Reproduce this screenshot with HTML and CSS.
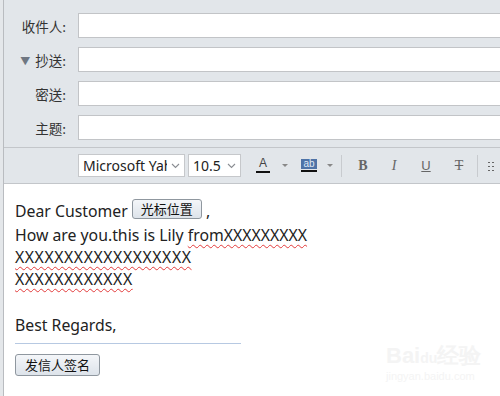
FILE: index.html
```html
<!DOCTYPE html>
<html>
<head>
<meta charset="utf-8">
<link rel="stylesheet" href="styles.css">
</head>
<body>
<div class="app">
  <div class="header">
    <div class="row"><label class="lbl">收件人:</label><div class="field"></div></div>
    <div class="row"><label class="lbl"><span class="tri">▼</span>抄送:</label><div class="field"></div></div>
    <div class="row"><label class="lbl">密送:</label><div class="field"></div></div>
    <div class="row"><label class="lbl">主题:</label><div class="field"></div></div>
  </div>
  <div class="toolbar">
    <div class="sel font">Microsoft Yah<span class="chev"><svg width="9" height="6" viewBox="0 0 9 6"><path d="M1 1l3.5 3.5L8 1" fill="none" stroke="#8a8d92" stroke-width="1.1"/></svg></span></div>
    <div class="sel size">10.5<span class="chev"><svg width="9" height="6" viewBox="0 0 9 6"><path d="M1 1l3.5 3.5L8 1" fill="none" stroke="#8a8d92" stroke-width="1.1"/></svg></span></div>
    <div class="tool colorA"><span class="a">A</span><span class="bar"></span></div>
    <span class="drop d1"></span>
    <div class="tool hl"><span class="ab">ab</span><span class="bar"></span></div>
    <span class="drop d2"></span>
    <span class="sep s1"></span>
    <div class="tool b">B</div>
    <div class="tool i">I</div>
    <div class="tool u">U</div>
    <div class="tool s">T</div>
    <span class="sep s2"></span>
    <div class="tool list"><svg width="12" height="12" viewBox="0 0 12 12"><g fill="#666"><rect x="0" y="2" width="2" height="1"/><rect x="4" y="2" width="2" height="1"/><rect x="0" y="6" width="2" height="1"/><rect x="4" y="6" width="2" height="1"/><rect x="0" y="10" width="2" height="1"/><rect x="4" y="10" width="2" height="1"/></g></svg></div>
  </div>
  <div class="body">
    <div class="line first">Dear Customer <span class="btn pos">光标位置</span> ,</div>
    <div class="line">How are you.this is Lily <span class="spell">fromXXXXXXXXX</span></div>
    <div class="line"><span class="spell wide">XXXXXXXXXXXXXXXXXX</span></div>
    <div class="line"><span class="spell wide">XXXXXXXXXXXX</span></div>
    <div class="line blank"></div>
    <div class="line">Best Regards,</div>
    <div class="sigline"></div>
    <div class="btn sig">发信人签名</div>
    <div class="wm"><div class="wm1">Bai<span class="paw">du</span>经验</div><div class="wm2">jingyan.baidu.com</div></div>
  </div>
</div>
</body>
</html>
```

FILE: styles.css
```css
* { box-sizing: border-box; }
html, body { margin: 0; padding: 0; }
body {
  width: 500px;
  height: 396px;
  overflow: hidden;
  background: #e4e7ea;
  font-family: "Noto Sans", "Noto Sans CJK SC", sans-serif;
}
.app {
  height: 396px;
  margin-left: 3px;
  border-left: 1px solid #b9bcc0;
  background: #fff;
  position: relative;
}
.header {
  background: #e2e6ea;
  padding-top: 13px;
  height: 147px;
}
.row {
  display: flex;
  align-items: center;
  height: 25px;
  margin-bottom: 9px;
}
.lbl {
  width: 74px;
  padding-right: 12px;
  text-align: right;
  font-family: "Noto Sans CJK SC", sans-serif;
  font-size: 13.5px;
  color: #333;
  white-space: nowrap;
}
.tri {
  font-size: 10px;
  color: #6f7782;
  margin-right: 5px;
  position: relative;
  top: -1px;
}
.field {
  flex: 1;
  height: 25px;
  background: #fff;
  border: 1px solid #c2c4c7;
  border-right: none;
}
.toolbar {
  height: 37px;
  background: #e2e6ea;
  border-top: 1px solid #c3c6ca;
  border-bottom: 1px solid #c3c6ca;
  display: flex;
  align-items: center;
  padding-left: 74px;
}
.sel {
  height: 23px;
  background: #fff;
  border: 1px solid #c6c8cb;
  font-size: 14px;
  color: #222;
  display: flex;
  align-items: center;
  padding-left: 4px;
  position: relative;
  overflow: hidden;
  white-space: nowrap;
}
.sel.font { width: 107px; margin-right: 3px; }
.sel.size { width: 53px; margin-right: 14px; }
.chev {
  position: absolute;
  right: 0;
  top: 0;
  width: 17px;
  height: 21px;
  background: #fff;
  display: flex;
  align-items: center;
  justify-content: center;
}
.tool {
  font-size: 13px;
  color: #555;
  display: flex;
  flex-direction: column;
  align-items: center;
  justify-content: center;
}
.colorA { width: 16px; margin-right: 11px; }
.colorA .a { font-family: "Liberation Sans", sans-serif; font-size: 12px; line-height: 11px; color: #444; }
.bar { width: 14px; height: 2px; background: #111; margin-top: 2px; }
.drop {
  width: 0; height: 0;
  border-left: 3px solid transparent;
  border-right: 3px solid transparent;
  border-top: 3px solid #888;
}
.d1 { margin-right: 13px; }
.d2 { margin-right: 8px; }
.hl { width: 16px; margin-right: 10px; }
.hl .ab {
  background: #4e73a7;
  color: #dfe8f5;
  font-family: "Liberation Sans", sans-serif;
  font-size: 10px;
  line-height: 10px;
  width: 16px;
  text-align: center;
  height: 10px;
}
.hl .bar { width: 16px; margin-top: 1px; }
.sep { width: 1px; height: 22px; background: #c8cbcf; }
.s1 { margin-right: 16px; }
.s2 { margin-right: 10px; }
.b { font-family: "Liberation Serif", serif; font-weight: bold; width: 10px; margin-right: 21px; color: #666; font-size: 14px; }
.i { font-family: "Liberation Serif", serif; font-style: italic; width: 10px; margin-right: 22px; color: #666; font-size: 14px; }
.u { font-family: "Liberation Sans", sans-serif; text-decoration: underline; width: 10px; margin-right: 21px; color: #666; font-size: 13px; }
.s { font-family: "Liberation Serif", serif; text-decoration: line-through; width: 14px; margin-right: 11px; color: #666; font-size: 14px; }
.body {
  padding: 14px 0 0 11px;
  font-size: 15.8px;
  color: #222;
  position: relative;
  height: 212px;
}
.line { height: 22px; line-height: 22px; white-space: nowrap; }
.line.first { height: 26px; line-height: 26px; }
.line.blank { height: 24px; }
.spell {
  text-decoration: underline wavy #e23b3b;
  text-decoration-thickness: 1px;
  text-underline-offset: 3px;
}
.wide { letter-spacing: 0.55px; }
.btn {
  display: inline-block;
  font-family: "Noto Sans CJK SC", sans-serif;
  font-size: 13px;
  color: #111;
  border: 1px solid #8f979f;
  border-radius: 3px;
  background: linear-gradient(#f4f6f9, #dde3ea);
  line-height: 18px;
  padding: 0 8px;
}
.pos { vertical-align: 3px; }
.sigline {
  width: 226px;
  height: 1px;
  background: #b7c9e2;
  margin-top: 7px;
  margin-bottom: 9px;
}
.sig { line-height: 20px; padding: 0 9px; }
.wm {
  position: absolute;
  left: 382px;
  top: 160px;
  color: #f4f4f4;
  font-family: "Liberation Sans", sans-serif;
}
.wm1 { font-size: 22px; font-weight: bold; line-height: 24px; }
.wm2 { font-size: 11px; }
.paw { font-size: 14px; }
```
